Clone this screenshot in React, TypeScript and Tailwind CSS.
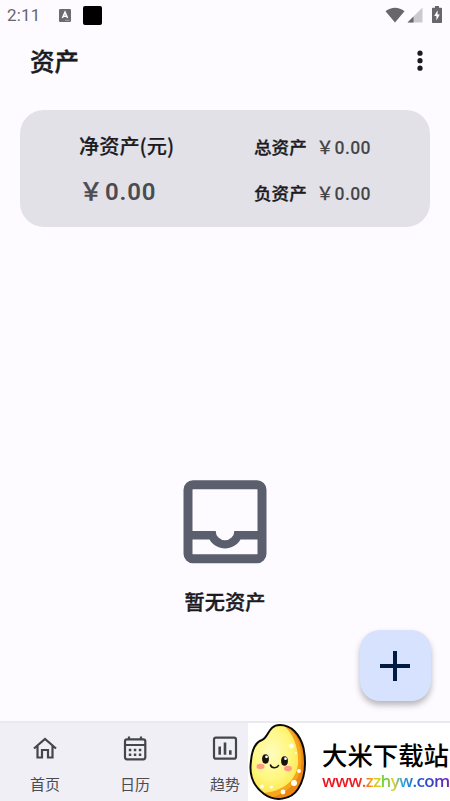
import type { ReactNode } from 'react'

function StatusBar() {
  return (
    <div className="flex h-8 shrink-0 items-center justify-between pl-[7px] pr-[8px] text-[#67666a]">
      <div className="flex items-center pb-px">
        <span className="w-[52px] font-['Roboto',sans-serif] text-[17px] leading-none tracking-[0.2px]">2:11</span>
        <svg width="12" height="13" viewBox="0 0 12 13">
          <rect width="12" height="13" rx="1.2" fill="#6b6a6e" />
          <path d="M3.4 9 6 3.2 8.6 9M4.3 7.2h3.4" fill="none" stroke="#fff" strokeWidth="1.5" />
          <path d="M6 11.3h4.5" stroke="#bbb" strokeWidth=".7" />
        </svg>
        <span className="ml-3 size-[19px] rounded-[2px] bg-black" />
      </div>
      <div className="flex items-center pb-[3px]">
        <svg width="20" height="16" viewBox="0 0 20 16">
          <path d="M.5 4.3C6-.6 14-.6 19.5 4.3L10 15.5Z" fill="#67666a" />
        </svg>
        <svg className="ml-[2px]" width="16" height="16" viewBox="0 0 16 16">
          <path d="M15.5.5v15H.5Z" fill="#cbc9cd" />
          <path d="M6.5 9.5v6h-6Z" fill="#67666a" />
        </svg>
        <svg className="ml-[9px]" width="10" height="17" viewBox="0 0 10 17">
          <path d="M3 0h4v1.7h2.2q.8 0 .8.8v13.7q0 .8-.8.8H.8q-.8 0-.8-.8V2.5q0-.8.8-.8H3Z" fill="#67666a" />
          <path d="M5.6 4.2 2.2 10h2.2v4.4L7.8 8.5H5.6Z" fill="#fff" />
        </svg>
      </div>
    </div>
  )
}

function SideRow({ label }: { label: string }) {
  return (
    <div className="flex h-[46px] items-center whitespace-nowrap">
      <span className="w-[62px] text-[17.6px] text-[#1b1b1f] [-webkit-text-stroke:0.3px]">{label}</span>
      <span className="flex items-baseline text-[#45464c]">
        <span className="w-[18.5px] text-[18px]">￥</span>
        <span className="font-['Roboto',sans-serif] text-[17.6px] tracking-[0.4px]">0.00</span>
      </span>
    </div>
  )
}

function SummaryCard() {
  return (
    <section className="mx-5 mt-[18px] flex h-[117px] shrink-0 rounded-[24px] bg-[#e2e1e7] pt-[13px] font-medium leading-none">
      <div className="w-[234px] pl-[59px]">
        <div className="flex h-[45px] items-center pt-px text-[20.2px] text-[#1b1b1f] [-webkit-text-stroke:0.2px]">
          净资产(元)
        </div>
        <div className="flex h-[45px] items-center text-[#4b4b52]">
          <span className="flex items-baseline font-semibold">
            <span className="w-[26px] text-[24px] font-medium [-webkit-text-stroke:0.4px]">￥</span>
            <span className="font-['Roboto',sans-serif] text-[24px] tracking-[0.8px]">0.00</span>
          </span>
        </div>
      </div>
      <div className="pt-px">
        <SideRow label="总资产" />
        <SideRow label="负资产" />
      </div>
    </section>
  )
}

function EmptyState() {
  return (
    <div className="mt-[253px] flex shrink-0 flex-col items-center">
      <svg width="84" height="84" viewBox="0 0 84 84" fill="none">
        <rect x="5" y="4.7" width="74" height="74" rx="5" stroke="#5b5e6c" strokeWidth="9" />
        <path d="M6 51h26.7a9.3 9.3 0 0 0 18.6 0H78v8.5H57.5a17.9 17.9 0 0 1-31 0H6Z" fill="#5b5e6c" />
      </svg>
      <p className="mt-[28px] text-[20.2px] font-medium leading-5 text-[#1b1b1f] [-webkit-text-stroke:0.4px]">
        暂无资产
      </p>
    </div>
  )
}

function NavItem({ label, children }: { label: string; children: ReactNode }) {
  return (
    <div className="flex w-[90px] flex-col items-center pt-[10px]">
      <svg width="30" height="30" viewBox="0 0 30 30" fill="none" stroke="#45464c" strokeWidth="2.2">
        {children}
      </svg>
      <span className="mt-[13px] text-[15px] leading-4 text-[#4b4b50]">{label}</span>
    </div>
  )
}

function RiceMascot() {
  return (
    <svg className="mt-px ml-px shrink-0" width="58" height="78" viewBox="0 0 58 78">
      <defs>
        <radialGradient id="grain" cx=".38" cy=".38" r=".65">
          <stop offset="0" stopColor="#fffcc0" />
          <stop offset=".5" stopColor="#fff780" />
          <stop offset="1" stopColor="#fbdd35" />
        </radialGradient>
        <clipPath id="body">
          <path d="M31 1C42 1 51 10 54.500 24C58 42 56 54 49 65C42 76 26 78 15 70C4 62 0 50 2 37C3 25 7 18 13 16C20 13 19 1 31 1Z" />
        </clipPath>
      </defs>
      <g clipPath="url(#body)">
        <rect width="58" height="78" fill="url(#grain)" />
        <path d="M33 0C44 8 50 24 49 40C47 57 34 68 12 69L22 78H58V0Z" fill="#f7a51c" />
        <path d="M38 0C50 14 54 26 52 42C50 58 38 70 20 74L22 78H58V0Z" fill="#ec8714" />
      </g>
      <g fill="#fffef0">
        <circle cx="42.5" cy="22" r="2.4" />
        <circle cx="47" cy="29" r="1" />
        <circle cx="50" cy="47" r="2" />
        <circle cx="45" cy="59" r="3" />
        <circle cx="34" cy="68" r="2.4" />
        <circle cx="22.5" cy="63" r="1.6" />
        <circle cx="13" cy="62.5" r="2" />
      </g>
      <ellipse cx="11.5" cy="42.5" rx="4" ry="2.8" fill="#ff9b87" />
      <ellipse cx="39" cy="44.5" rx="4" ry="2.8" fill="#ff9b87" />
      <ellipse cx="16.5" cy="35" rx="3.4" ry="4.7" fill="#17120e" />
      <ellipse cx="35.5" cy="37" rx="3.4" ry="4.7" fill="#17120e" />
      <circle cx="17.5" cy="32.8" r="1.4" fill="#fff" />
      <circle cx="36.5" cy="34.7" r="1.4" fill="#fff" />
      <path d="M21.5 41C22.5 44.5 28 44.5 29.5 41.5" fill="none" stroke="#17120e" strokeWidth="1.6" strokeLinecap="round" />
      <path
        d="M31 1C42 1 51 10 54.5 24C58 42 56 54 49 65C42 76 26 78 15 70C4 62 0 50 2 37C3 25 7 18 13 16C20 13 19 1 31 1Z"
        fill="none"
        stroke="#0b0a08"
        strokeWidth="2"
      />
    </svg>
  )
}

function SiteBadge() {
  return (
    <div className="absolute right-0 bottom-0 flex h-[78px] w-[202px] bg-white">
      <RiceMascot />
      <div className="ml-[15px] pt-[17px]">
        <div className="whitespace-nowrap text-[25.4px] font-medium leading-[28px] text-black">大米下载站</div>
        <div className="mt-px w-[127px] bg-[linear-gradient(90deg,#e8131b_0%,#f01b20_28%,#f0562c_33%,#f4b21e_40%,#c9d923_45%,#45c850_50%,#e8cf2a_56%,#2aa7d8_63%,#1f62d0_74%,#2a49c8_84%,#7a1fb8_100%)] bg-clip-text font-['Open_Sans',sans-serif] text-[17px] font-semibold leading-6 tracking-[-0.65px] text-transparent">
          www.zzhyw.com
        </div>
      </div>
    </div>
  )
}

export default function App() {
  return (
    <div className="relative flex h-[801px] w-[450px] flex-col overflow-hidden bg-[#fdfbff] font-['Noto_Sans_CJK_SC',sans-serif]">
      <StatusBar />
      <header className="flex h-[60px] shrink-0 items-center justify-between pb-[3px] pl-[30px] pr-[27px]">
        <h1 className="pt-px text-[24.5px] font-medium leading-none text-[#1b1b1f] [-webkit-text-stroke:0.4px]">资产</h1>
        <svg width="6" height="22" viewBox="0 0 6 22" fill="#1b1b1f">
          <circle cx="3" cy="3.2" r="2.6" />
          <circle cx="3" cy="10.7" r="2.6" />
          <circle cx="3" cy="18.2" r="2.6" />
        </svg>
      </header>

      <SummaryCard />
      <EmptyState />

      <nav className="mt-auto flex h-20 shrink-0 border-t-2 border-[#eae9ee] bg-[#f0eff6]">
        <NavItem label="首页">
          <path d="M4 15.5 15 6 26 15.5M7.5 13v11.5H12V17h6v7.5h4.5V13" />
        </NavItem>
        <NavItem label="日历">
          <rect x="5" y="6.3" width="20.3" height="20" rx="2" />
          <path d="M5 12h20M9 3.5v3M21 3.5v3" />
          <path d="M8.8 17h2.5M13.8 17h2.5M18.8 17h2.5M8.8 21.7h2.5M13.8 21.7h2.5M18.8 21.7h2.5" strokeWidth="2.5" />
        </NavItem>
        <NavItem label="趋势">
          <rect x="4" y="4.7" width="22" height="21" rx="2" />
          <path d="M9.7 13.5v8.3M15 9.5v12.3M20.3 17.3v4.5" strokeWidth="2.6" />
        </NavItem>
      </nav>

      <button className="absolute top-[630px] left-[359.5px] flex size-[71px] items-center justify-center rounded-[20px] bg-[#d7e2ff] shadow-[0_4px_6px_rgba(0,0,0,0.28)]">
        <svg width="30" height="30" viewBox="0 0 30 30" stroke="#001a41" strokeWidth="4">
          <path d="M15 0v30M0 15h30" />
        </svg>
      </button>
      <SiteBadge />
    </div>
  )
}
